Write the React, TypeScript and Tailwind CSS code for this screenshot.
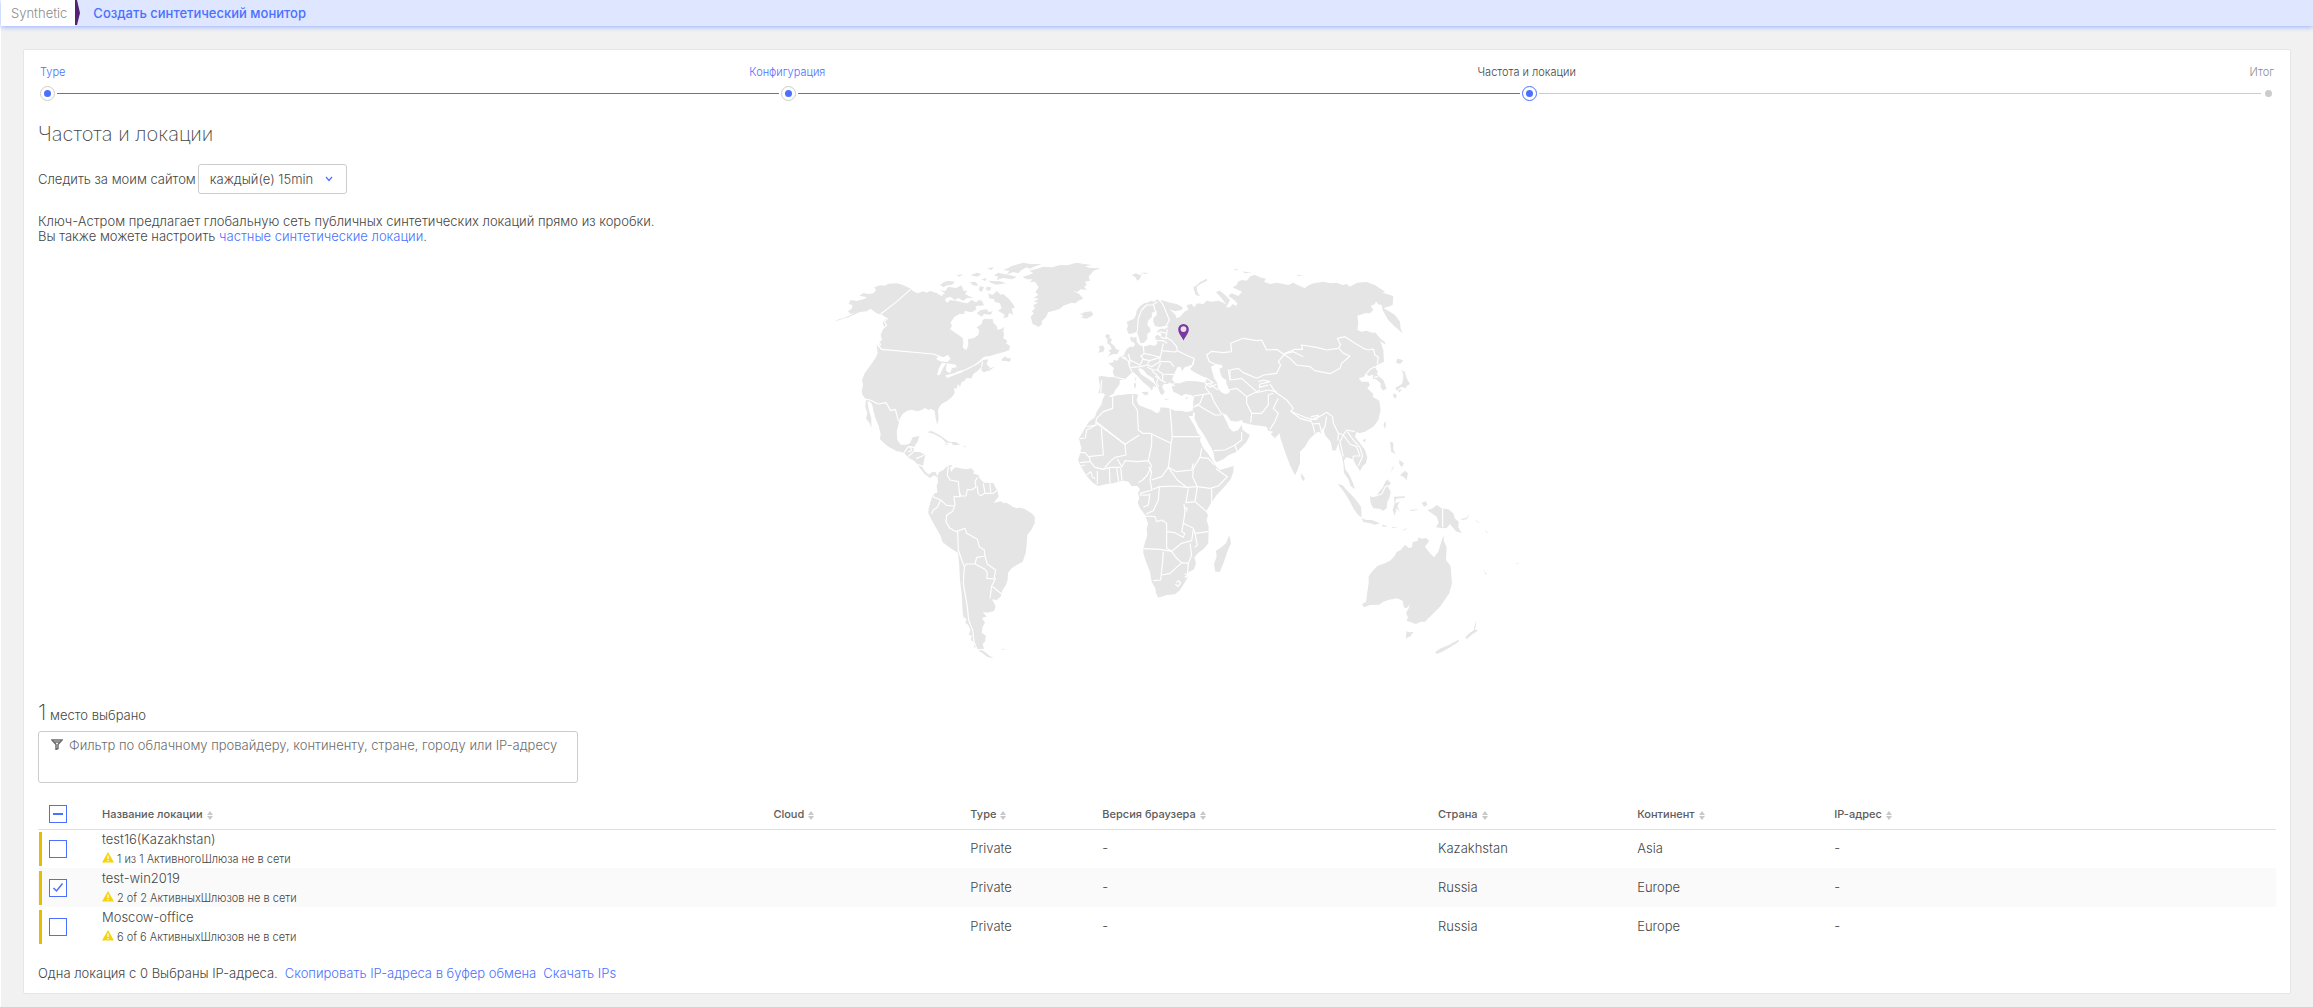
import React, { useState } from 'react';

const LAND = '#e5e5e5';

const americaLand = [
  // mainland
  '10,215 28,207 40,205 60,196 75,188 62,192 54,184 65,176 68,166 56,162 62,150 80,153 100,148 112,142 88,137 100,129 115,132 130,130 138,120 133,112 150,106 165,107 175,101 200,100 212,103 220,106 240,115 248,122 262,130 280,124 290,128 300,123 322,130 330,136 350,142 345,150 352,158 360,150 378,152 395,157 412,160 425,150 440,158 448,165 436,170 440,178 425,187 405,183 402,192 388,192 372,202 362,218 366,228 360,237 372,246 385,254 398,264 400,280 398,290 402,297 410,299 415,285 414,268 432,264 445,255 448,240 440,232 455,222 458,210 465,206 478,208 488,206 490,218 500,228 503,240 515,236 522,230 520,245 522,252 520,265 532,272 528,280 540,288 538,300 525,305 500,312 480,318 462,320 445,335 430,350 445,338 458,330 475,328 470,342 480,352 462,368 454,360 455,350 442,364 430,372 425,385 408,385 404,393 395,396 390,410 384,402 380,416 372,414 374,430 365,442 352,452 335,462 328,470 324,482 326,505 322,524 317,505 314,482 302,476 295,480 285,474 275,480 262,484 245,479 232,482 218,492 210,505 205,525 200,545 202,570 212,584 228,584 240,580 248,562 268,558 264,572 258,582 252,592 250,606 270,606 286,616 282,632 278,654 284,662 295,674 308,666 318,667 322,682 312,676 300,684 284,672 270,655 262,642 252,632 234,622 222,608 212,605 200,604 190,598 178,592 165,582 150,568 152,552 146,528 135,500 130,480 126,462 118,454 112,456 116,478 124,505 124,534 118,518 108,506 112,490 106,470 108,448 98,436 95,425 99,405 96,390 104,370 122,345 138,322 143,308 140,282 154,300 146,280 156,270 152,255 162,232 158,215 168,205 158,195 140,190 122,176 110,184 90,186 55,202',
  // arctic islands
  '475,130 488,135 500,123 512,134 520,132 540,150 555,172 545,176 550,195 538,188 533,202 520,204 524,194 504,182 515,175 510,160 495,156 492,148 478,145',
  '330,120 345,124 355,110 378,114 395,106 400,122 412,122 405,132 430,145 412,144 400,152 385,144 375,150 360,140 350,144 335,135 345,130',
  '330,105 342,96 355,92 375,95 366,104 352,106 340,112',
  '545,48 580,38 600,42 635,42 612,50 600,56 590,52 575,60 565,70 550,66 530,74 538,62 520,60 535,54',
  '505,68 540,76 560,80 548,88 520,84 500,90 505,80 492,76',
  '475,92 510,94 528,100 500,104 485,100',
  '422,76 440,68 455,72 442,80', '380,76 400,72 388,80', '455,88 470,84 466,94', '472,55 492,52 484,60', '420,96 438,96 445,108 428,106',
  '450,108 462,112 455,126 446,120', '470,110 484,112 480,122 468,120',
  '440,190 452,180 470,178 476,186 488,184 482,194 462,192 456,200',
  '436,160 446,150 456,152 462,166 448,168',
  '515,327 527,318 530,324 543,325 540,335 525,332 516,334', '458,366 475,356 494,350 478,362',
  '290,546 305,543 330,556 352,572 366,578 348,578 335,565 312,552', '362,576 378,576 390,584 370,586', '345,580 356,583 348,585', '398,588 410,589 404,591',
  // greenland
  '578,80 595,76 610,68 598,62 622,56 640,50 668,52 690,45 712,46 740,38 762,42 785,45 765,49 780,54 812,55 790,62 785,70 776,80 780,92 765,95 770,105 763,110 770,120 752,118 742,126 728,122 748,132 760,146 745,152 736,160 725,158 700,167 690,176 672,182 655,186 648,202 636,212 635,224 626,230 608,222 602,200 612,190 605,184 615,176 610,165 625,158 612,155 626,146 612,143 625,134 616,126 626,112 615,95 600,96 608,88 590,88',
  '750,192 758,190 765,186 785,184 790,195 770,206 754,203 760,197',
];

const southAmericaLand = [
  '262,78 268,66 280,60 290,50 300,46 308,44 300,55 304,66 310,56 318,52 330,55 350,58 364,55 374,66 368,70 385,75 388,84 402,98 430,99 436,112 442,120 446,140 435,152 432,160 450,152 462,160 470,158 488,170 500,175 512,173 525,178 545,190 554,200 554,220 545,238 532,255 530,285 527,310 518,335 500,345 485,355 474,368 473,390 468,405 458,420 452,440 440,450 425,448 432,458 437,470 432,483 412,488 398,486 410,500 396,504 405,518 398,530 395,548 408,558 405,575 398,582 402,596 385,598 372,590 374,578 362,570 366,556 356,556 362,540 354,524 346,518 350,508 340,500 338,485 337,470 335,430 330,390 328,350 324,308 305,297 278,277 272,258 262,240 245,210 235,190 236,175 246,142 254,130 262,128 260,108 264,95',
  '385,602 396,600 410,610 416,616 432,625 412,621 398,610',
  '454,598 468,596 458,600',
];

const eurasiaLand = [
  '115,380 125,378 145,381 165,382 158,365 162,354 145,340 160,337 160,330 172,332 178,322 190,318 200,298 210,290 222,290 225,282 216,272 222,262 230,262 230,275 238,285 250,290 270,284 282,288 292,282 290,270 284,262 292,254 300,258 306,262 302,248 290,245 300,236 318,236 326,228 312,228 300,231 285,228 280,215 280,205 290,195 290,182 284,186 275,188 276,200 264,212 262,225 270,234 272,244 262,252 262,266 252,278 242,280 236,262 230,244 222,250 206,252 200,238 204,228 200,215 222,206 228,195 230,182 240,168 252,160 262,158 272,152 282,155 292,148 300,155 305,150 330,158 350,162 368,172 366,180 345,184 328,178 345,192 350,205 360,200 375,184 385,180 380,165 395,162 402,172 412,160 430,162 440,152 455,155 475,152 490,158 500,164 482,142 468,126 480,122 492,132 510,150 505,160 498,172 510,172 518,162 528,168 532,160 520,148 505,138 515,130 535,138 546,125 530,118 518,112 530,105 535,94 548,90 560,92 572,78 585,75 600,82 618,86 612,95 630,102 650,98 685,105 700,98 720,108 735,115 742,108 760,100 790,95 812,100 830,98 848,105 860,102 870,110 880,104 892,98 920,96 945,105 975,125 968,128 1000,138 998,165 985,170 970,174 985,182 1005,195 1020,215 1022,236 1028,250 1005,230 985,210 976,195 968,180 965,165 955,163 948,154 945,162 932,168 940,180 930,190 915,190 892,197 895,218 892,240 905,245 920,242 940,250 950,260 962,275 970,300 972,335 958,342 950,345 945,352 954,365 950,372 960,382 970,390 980,415 970,422 962,412 962,400 948,388 938,386 940,374 925,378 918,368 912,380 896,385 905,395 925,395 930,404 922,415 940,432 938,440 958,452 962,480 955,510 940,530 915,545 898,550 890,545 885,560 900,580 915,600 922,622 918,640 908,648 900,664 895,654 888,645 880,630 870,625 858,622 852,632 856,658 864,668 870,678 880,702 885,718 872,708 866,690 852,668 850,640 846,620 838,596 835,580 828,600 818,603 812,575 795,555 790,530 785,550 775,545 765,552 748,568 735,590 720,605 720,640 712,662 705,675 692,650 675,605 663,570 658,550 645,565 632,552 640,545 625,542 620,530 605,528 580,525 550,518 545,510 530,515 512,512 500,495 486,488 492,500 500,515 508,535 520,545 535,540 545,524 548,540 570,555 560,575 545,590 530,605 505,616 490,628 470,637 464,630 460,605 446,580 428,548 415,530 403,505 405,490 398,485 400,455 402,440 392,435 375,432 365,438 350,430 340,425 335,410 345,400 325,402 312,402 306,410 314,425 308,436 300,430 294,412 286,400 280,385 262,374 250,360 240,354 235,358 242,372 262,385 282,400 290,412 280,408 276,422 268,412 248,395 230,375 218,365 205,378 195,388 180,390 178,404 166,420 160,432 142,440 130,430 115,430 120,410 118,395',
  '135,258 142,252 150,256 148,264 156,268 152,278 165,290 168,298 178,300 172,312 158,313 143,320 152,308 145,302 155,296 150,286 142,280 142,268',
  '115,290 128,286 134,296 130,305 114,308 120,298',
  '405,130 400,112 412,104 420,96 440,86 442,92 425,100 410,110 412,125 420,138 408,136',
  '215,75 228,70 240,76 246,70 240,86 232,92 226,82', '242,68 268,68 255,72', '520,58 535,58 530,62', '545,64 575,68 556,70', '708,74 732,75 716,78',
  '225,382 229,385 227,396', '222,400 228,400 227,414 222,412', '245,426 265,425 262,436 252,434', '312,446 328,447 318,450', '375,445 386,440 380,448',
  '210,262 218,260 220,272 214,276',
  '940,245 948,250 962,266 975,276 976,284 960,272 950,262 942,254',
  '1012,326 1022,328 1030,332 1020,342 1008,338', '1025,360 1035,366 1040,385 1050,402 1040,408 1038,415 1024,410 1010,422 1006,414 1026,402 1030,385 1030,372',
  '1000,430 1010,434 1008,446 1000,440', '1014,420 1026,418 1018,428', '975,514 978,522 975,537 971,526', '908,570 918,566 914,578',
  '990,575 1000,578 1000,600 1008,612 994,606', '1020,676 1035,662 1044,670 1040,690 1030,680', '1002,645 1000,655 990,668', '1018,630 1032,640 1026,652 1018,642',
  '722,668 735,685 730,694 724,684',
  '966,718 978,692 992,700 984,712',
];

const africaLand = [
  '135,45 155,52 170,46 185,45 205,42 225,42 235,44 230,60 236,75 260,85 275,90 290,100 298,96 302,82 325,84 345,92 365,92 380,96 400,92 398,108 386,108 395,124 405,140 412,158 422,170 420,182 430,205 445,222 455,238 465,255 470,262 480,270 500,264 521,258 520,275 512,298 498,315 470,345 450,375 438,395 444,405 440,420 446,440 445,490 430,508 415,518 403,532 408,550 402,568 385,577 382,595 360,630 345,643 320,645 295,653 288,640 286,625 275,605 270,575 258,545 250,520 250,505 262,465 260,450 264,430 255,405 240,385 233,368 238,355 234,340 240,328 232,318 215,318 205,305 190,302 172,306 160,310 140,312 115,318 98,308 82,290 72,275 62,258 54,240 60,222 64,205 57,175 75,145 88,124 105,112 110,95 125,72 128,58',
  '508,466 513,490 503,512 492,545 480,575 466,575 462,552 470,530 468,512 482,503 498,490',
];

const oceaniaLand = [
  '216,492 228,486 230,470 236,430 236,410 242,400 262,378 285,370 300,362 314,348 320,336 332,330 345,314 356,324 366,322 368,306 384,302 385,292 395,296 408,294 418,302 405,320 420,340 432,352 445,335 452,312 460,286 462,304 470,322 468,360 482,378 486,430 478,460 450,500 425,525 405,545 392,545 378,552 350,542 354,530 348,520 356,505 360,492 338,520 350,505 342,502 338,482 320,475 295,480 278,486 268,494 240,495 222,502',
  '350,574 360,577 371,575 362,588 347,596', '436,636 450,626 475,616 508,598 505,606 480,622 455,636 440,642',
  '556,542 558,558 554,568 564,572 548,582 530,598 526,592 540,578 552,570',
  '143,132 158,136 175,156 185,165 200,182 213,200 215,232 205,226 190,205 180,185 165,160 156,148',
  '215,234 228,240 245,240 270,250 255,254 240,250 220,246', '275,254 295,258 280,261', '302,260 325,262 310,264', '335,272 355,262 345,270',
  '240,168 250,172 262,165 268,154 282,140 285,128 292,118 303,130 294,140 302,155 298,175 292,185 290,205 280,212 268,206 250,205 242,190',
  '312,170 345,169 345,173 318,176 316,190 330,185 322,198 330,216 320,205 314,228 308,210 314,190',
  '395,188 408,184 412,195 402,200', '356,210 390,208 368,213', '412,210 426,206 440,195 455,205 475,208 490,220 495,236 506,245 505,262 515,280 498,274 480,252 470,265 455,264 438,262 446,248 440,230 420,216',
  '512,236 528,234 540,222 530,238 516,240', '580,388 592,406 586,402', '678,370 686,368 682,373', '554,238 572,252 560,245', '585,268 596,282 588,276',
];

const waters = [
  '345,400 336,388 344,368 352,352 362,350 366,364 374,352 386,348 395,345 405,325 400,345 390,358 402,366 425,378 440,388 436,398 410,394 380,393 360,400',
  '453,350 468,342 486,345 488,352 478,356 482,372 486,382 498,390 500,402 510,425 500,433 486,428 474,415 472,398 462,385 458,368',
];

const lakes = [
  '318,326 330,318 340,322 354,314 362,326 352,336 330,334',
  '336,338 348,340 338,356 330,374 321,376 326,356',
  '350,340 378,344 380,352 366,354 360,370 348,362', '346,376 364,372 378,368 400,360 398,366 372,376 352,384',
];

const americaBorders = [
  '242,118 200,155 152,192', '138,278 155,298 310,312 330,320', '378,368 405,360 425,350 440,342 458,330', '458,335 455,350',
  '108,448 120,450 145,462 168,458 182,482 196,478 205,512 212,515', '222,608 235,590 252,592', '234,606 244,602 242,588', '234,620 250,606', '258,626 282,616', '264,644 280,650',
  '160,200 172,206 162,215 170,225 160,235', '140,278 152,282 146,292', '470,345 480,340 490,350',
];
const southAmericaBorders = [
  '295,50 292,75 300,90 325,95 328,125 330,140 312,140 315,165 308,184 290,196 288,215 300,235 318,245 345,235 350,250 382,268 388,290 403,300 405,318 380,322 375,342 350,342 343,350',
  '328,125 332,138 348,138 352,118 365,120 378,110 375,95 382,82', '382,110 384,130 392,137 405,130 400,100', '405,130 430,130 442,120', '420,100 422,128',
  '248,140 272,150 262,172 250,180 245,192', '272,150 290,166 312,168', '323,245 325,300 335,330 343,350 340,400 345,430 352,470 356,510 368,540 372,575 382,600',
  '375,342 405,358 412,368 410,385 432,387 437,360 412,342 405,318', '437,385 425,408 455,432', '425,408 420,445', '438,155 462,150',
];
const eurasiaBorders = [
  '300,150 312,170 328,210 316,232', '292,155 278,165 260,165 245,180 235,205 232,245', '280,162 287,188', '322,238 318,262 335,272 350,290 352,302 385,318 402,325 398,345',
  '298,245 320,250', '302,262 320,266', '288,272 310,272 322,280', '310,280 305,302 345,306 352,302', '250,288 252,310 275,315 300,322 306,302', '300,322 300,335 330,335 342,350', '205,312 210,330 208,348', '210,330 240,345 250,325 242,318 252,312',
  '250,328 270,332 300,322', '185,322 205,332 208,348 216,366', '212,352 240,350 262,345 268,332', '262,345 275,350 300,335', '262,352 280,360 292,360 302,340', '275,362 290,375 302,390 318,398', '292,360 308,372 345,374', '308,372 308,392',
  '285,380 296,382 290,398 296,410', '190,320 200,325', '165,381 195,388', '125,390 122,430',
  '470,345 448,335 440,315 455,304 490,308 515,305 512,280 550,265 590,272 605,270 620,300 650,298 670,312 705,298 728,298 724,285 770,292 800,300 835,295 842,285 832,265 855,260 885,280 910,295 925,300 940,297 945,315 955,322 952,342',
  '670,312 690,325 710,345 750,350 765,362 810,371 840,355 845,340 870,318 850,310 838,296', '672,312 700,305 730,320',
  '510,360 535,355 550,368 590,385 612,375 650,370 662,345 655,335 672,315', '505,358 510,390 545,385 590,425', '510,390 510,360', '505,420 530,415 560,440 590,425 600,420', '595,395 610,390 630,395 600,402 598,412 625,405', '560,440 560,460 575,490 572,518',
  '575,490 605,490 625,465 625,435 640,430', '590,428 625,420 650,425', '630,402 645,425 680,450 700,475 692,484 735,502 758,508 778,500 800,487 818,500 820,520 835,550 850,555 860,540 885,545', '655,445 640,475 655,490 645,515 630,538', '695,486 720,505 755,515',
  '752,508 760,530 765,550', '758,522 778,520 785,548', '800,500 795,530 786,545', '835,550 834,572', '850,555 840,575 850,620', '850,555 870,582 890,590 900,618 880,618 878,640', '862,545 880,570 900,592 908,618 895,648', '752,500 775,496 770,508 755,508',
  '400,472 415,465 430,475 465,495 485,495', '400,438 450,430 436,412 440,400', '430,435 420,460 402,470', '452,430 462,455 478,480 485,492', '415,378 440,385 460,398 440,402', '445,400 475,420', '435,398 450,412 470,402', '462,602 495,600 525,585 545,570 545,545', '525,585 532,606', '945,350 930,358 920,370', '942,382 955,380', '325,398 345,408',
];
const africaBorders = [
  '158,52 158,85 130,95 110,115 108,125 195,193 238,165', '60,176 76,174 80,150 108,135 108,125', '80,140 110,135', '124,145 130,225 85,230', '218,45 218,70 232,90 235,150 248,160 270,160 333,190', '330,84 337,170 420,170', '337,170 333,190 330,225 325,262',
  '275,160 275,195 265,242', '108,128 195,193 198,225 165,232 150,245 130,268', '185,262 195,242 230,245 265,242 275,258 262,285 248,300 235,308', '60,218 75,218 90,235 90,245 60,248', '62,258 75,255', '88,242 105,262 130,268 150,262 180,262', '80,285 92,275 98,292 106,296', '112,272 112,312', '148,264 150,310', '170,265 176,305', '182,262 186,302', '172,236 186,262',
  '266,260 275,275 270,300 276,330 240,340', '275,300 305,290 325,262 350,275 395,270 400,250', '325,262 352,300 380,322 410,320', '278,328 300,320 350,318 378,322', '420,232 400,265 398,290 412,320 450,325 475,318 502,290 468,266', '462,255 445,235 420,232 425,205',
  '412,320 405,365 378,368 385,325', '405,365 440,395', '455,325 455,370', '298,322 295,360 280,392 258,402', '270,340 265,375 250,382', '255,408 285,410 290,425 305,420 320,430 320,455 345,458 370,472 374,460 365,455 370,430 375,395 372,372', '370,430 400,445 405,460 445,455', '320,455 320,505 335,514', '250,506 300,508 335,514 365,490 395,482 400,448', '405,460 412,495 405,502',
  '310,515 308,545 302,600 280,602', '305,585 330,580 365,548 385,550 395,525 390,490', '335,514 350,535 365,548', '385,550 382,590', '348,608 356,602 362,608 354,620 346,612', '374,583 382,582 380,592 374,590', '238,345 268,345', '372,382 382,385 378,395',
];
const oceaniaBorders = ['458,205 458,262', '244,168 258,168 275,162 286,140 298,136'];

type Region = { x: number; y: number; land: string[]; borders: string[]; water: string[] };

const regions: Region[] = [
  { x: 830, y: 250, land: americaLand, borders: americaBorders, water: lakes },
  { x: 850, y: 450, land: southAmericaLand, borders: southAmericaBorders, water: [] },
  { x: 1060, y: 250, land: eurasiaLand, borders: eurasiaBorders, water: waters },
  { x: 1060, y: 380, land: africaLand, borders: africaBorders, water: [] },
  { x: 1290, y: 440, land: oceaniaLand, borders: oceaniaBorders, water: [] },
];

function WorldMap() {
  return (
    <svg viewBox="757 250 800 420" className="mx-auto block h-[420px] w-[800px] max-w-full" role="img" aria-label="Карта локаций">
      {regions.map((r) => (
        <g key={`${r.x}-${r.y}`} transform={`translate(${r.x} ${r.y}) scale(0.3333)`} strokeLinejoin="round">
          {r.land.map((p) => (
            <polygon key={p} points={p} fill={LAND} />
          ))}
          {r.water.map((p) => (
            <polygon key={p} points={p} fill="#fff" />
          ))}
          {r.borders.map((p) => (
            <polyline key={p} points={p} fill="none" stroke="#fff" strokeWidth="3.5" />
          ))}
        </g>
      ))}
      <path
        fillRule="evenodd"
        fill="#7c38a1"
        d="M1183.5 340.500c-1.600-3.600-5.300-7.200-5.300-11.300a5.300 5.300 0 0 1 10.600 0c0 4.100-3.700 7.700-5.300 11.300zm0-14.300a2.900 2.900 0 1 0 0 5.800 2.900 2.900 0 0 0 0-5.800z"
      />
    </svg>
  );
}

type StepState = 'done' | 'current' | 'todo';

function Dot({ state }: { state: StepState }) {
  if (state === 'todo') return <span className="size-[7px] shrink-0 rounded-full bg-[#cccccc]" />;
  return (
    <span
      className={
        state === 'current'
          ? 'flex size-[15px] shrink-0 items-center justify-center rounded-full border border-[#4b70ff]'
          : 'flex size-[15px] shrink-0 items-center justify-center rounded-full border border-[#cccccc]'
      }
    >
      <span className="size-[7px] rounded-full bg-[#4b70ff]" />
    </span>
  );
}

function Stepper() {
  return (
    <nav aria-label="Шаги" className="text-[11px] leading-4">
      <div className="relative flex justify-between">
        <a href="#type" className="text-[#4b70ff]">Type</a>
        <div className="absolute inset-x-2">
          <a href="#config" className="absolute left-1/3 -translate-x-1/2 text-[#4b70ff]">Конфигурация</a>
          <span className="absolute left-2/3 -translate-x-1/2 whitespace-nowrap text-[#454646]">Частота и локации</span>
        </div>
        <span className="text-[#8c8c8c]">Итог</span>
      </div>
      <div className="mt-1.5 mr-0.5 flex items-center">
        <Dot state="done" />
        <span className="mx-0.5 h-px flex-1 bg-[#4b70ff]" />
        <Dot state="done" />
        <span className="mx-0.5 h-px flex-1 bg-[#4b70ff]" />
        <Dot state="current" />
        <span className="mx-0.5 h-px flex-1 bg-[#cccccc]" />
        <span className="flex w-[9px] justify-end"><Dot state="todo" /></span>
      </div>
    </nav>
  );
}

function Check({ label, checked, mixed, onChange }: { label: string; checked: boolean; mixed?: boolean; onChange: () => void }) {
  return (
    <label className="relative block size-[18px]">
      <input
        type="checkbox"
        aria-label={label}
        checked={checked}
        onChange={onChange}
        className="block size-[18px] appearance-none border border-[#4b70ff] bg-white"
      />
      <svg viewBox="0 0 18 18" className="pointer-events-none absolute inset-0 size-[18px]" fill="none" stroke="#4b70ff">
        {mixed ? <path d="M4 9h10" strokeWidth="2" /> : checked ? <path d="M4.500 9l3 3 6-7.500" strokeWidth="1.500" /> : null}
      </svg>
    </label>
  );
}

function SortIcon() {
  return (
    <svg viewBox="0 0 6 9" className="mt-0.5 h-[9px] w-[6px]" fill="#c8c8c8">
      <path d="M3 0l3 4H0zM3 9L0 5h6z" />
    </svg>
  );
}

function Warning() {
  return (
    <svg viewBox="0 0 12 11" className="mb-0.5 h-[11px] w-3 shrink-0">
      <path d="M6 0l6 10.500H0z" fill="#f5d30f" />
      <path d="M6 3.500v3.500M6 8v1.200" stroke="#fff" strokeWidth="1.200" />
    </svg>
  );
}

const columns = ['Название локации', 'Cloud', 'Type', 'Версия браузера', 'Страна', 'Континент', 'IP-адрес'];

const rows = [
  { name: 'test16(Kazakhstan)', note: '1 из 1 АктивногоШлюза не в сети', country: 'Kazakhstan', continent: 'Asia' },
  { name: 'test-win2019', note: '2 of 2 АктивныхШлюзов не в сети', country: 'Russia', continent: 'Europe' },
  { name: 'Moscow-office', note: '6 of 6 АктивныхШлюзов не в сети', country: 'Russia', continent: 'Europe' },
];

function LocationsTable() {
  const [selected, setSelected] = useState([false, true, false]);
  const all = selected.every(Boolean);
  return (
    <table className="mt-[17px] w-full table-fixed border-collapse text-left">
      <colgroup>
        <col className="w-16" />
        <col className="w-[30%]" />
        <col className="w-[8.8%]" />
        <col className="w-[5.9%]" />
        <col className="w-[15%]" />
        <col className="w-[8.9%]" />
        <col className="w-[8.8%]" />
        <col />
      </colgroup>
      <thead>
        <tr className="h-[29px] border-b border-[#e0e0e0] text-[11px] text-[#5c5c5c]">
          <th className="p-0 pl-[11px]">
            <Check label="Выбрать все" checked={all} mixed={!all && selected.some(Boolean)} onChange={() => setSelected(selected.map(() => !all))} />
          </th>
          {columns.map((c) => (
            <th key={c} scope="col" className="p-0">
              <button type="button" className="flex items-center gap-1 font-medium">
                {c}
                <SortIcon />
              </button>
            </th>
          ))}
        </tr>
      </thead>
      <tbody>
        {rows.map((r, i) => (
          <tr key={r.name} className="h-[39px] even:bg-[#fafafa]">
            <td className="p-0">
              <div className="flex items-center gap-[7px] pl-px">
                <span className="h-[34px] w-[3px] bg-[#e6be00]" />
                <Check label={r.name} checked={selected[i]} onChange={() => setSelected(selected.map((s, j) => (j === i ? !s : s)))} />
              </div>
            </td>
            <td className="p-0">
              <div className="leading-4">{r.name}</div>
              <div className="mt-1 flex items-center gap-[3px] text-[11px] leading-4">
                <Warning />
                {r.note}
              </div>
            </td>
            <td className="p-0" />
            <td className="p-0">Private</td>
            <td className="p-0">-</td>
            <td className="p-0">{r.country}</td>
            <td className="p-0">{r.continent}</td>
            <td className="p-0">-</td>
          </tr>
        ))}
      </tbody>
    </table>
  );
}

export default function App() {
  return (
    <div className="min-h-screen border-l border-white bg-[#f1f1f1] pb-3 font-[Inter,sans-serif] text-[13px] leading-[15px] font-light text-[#454646]">
      <header className="flex h-[26px] items-center bg-[#dfe6ff] shadow-[0_1px_5px_#94adff]">
        <a href="#synthetic" className="flex h-full items-center bg-white pr-2 pl-2.5 text-[#8c8c8c]">Synthetic</a>
        <svg viewBox="0 0 5 26" className="h-[26px] w-[5px]" fill="#522273">
          <path d="M0 0h2l3 13-3 12H0z" />
        </svg>
        <a href="#create" className="ml-[13px] font-medium text-[#4b70ff]">Создать синтетический монитор</a>
      </header>

      <main className="mx-[22px] mt-[23px] rounded-[2px] border border-[#e6e6e6] bg-white px-3.5 pt-3.5 pb-3">
        <div className="px-0.5">
          <Stepper />
        </div>

        <h1 className="mt-[19px] text-[20px] leading-7 font-extralight">Частота и локации</h1>

        <div className="mt-4 flex items-center gap-0.5">
          <label htmlFor="freq">Следить за моим сайтом</label>
          <span className="relative">
            <select
              id="freq"
              defaultValue="15"
              className="h-[30px] w-[149px] appearance-none rounded-[3px] border border-[#cccccc] bg-white px-[11px] font-light"
            >
              <option value="15">каждый(е) 15min</option>
            </select>
            <svg viewBox="0 0 8 6" className="pointer-events-none absolute top-3 right-3.5 h-[6px] w-2" fill="none" stroke="#4b70ff" strokeWidth="1.200">
              <path d="M1 1l3 3.500 3-3.500" />
            </svg>
          </span>
        </div>

        <p className="mt-5">
          Ключ-Астром предлагает глобальную сеть публичных синтетических локаций прямо из коробки.
          <br />
          Вы также можете настроить <a href="#private" className="text-[#4b70ff]">частные синтетические локации</a>.
        </p>

        <div className="mt-1.5">
          <WorldMap />
        </div>

        <p className="mt-7 leading-7">
          <span className="text-[22px] font-extralight">1</span> место выбрано
        </p>

        <label className="mt-0.5 flex h-[52px] w-[540px] items-start gap-[6px] rounded-[3px] border border-[#cccccc] px-3 pt-[5px]">
          <svg viewBox="0 0 12 11" className="mt-0.5 h-[11px] w-3 shrink-0" fill="none" stroke="#6d6d6d" strokeWidth="1.500">
            <path d="M1 1h10L7 5.500V9.500L5 10.500V5.500zM2.500 3h7" />
          </svg>
          <input
            aria-label="Фильтр"
            placeholder="Фильтр по облачному провайдеру, континенту, стране, городу или IP-адресу"
            className="h-4 flex-1 bg-transparent outline-none placeholder:text-[#6d6d6d]"
          />
        </label>

        <LocationsTable />

        <p className="mt-5 flex gap-[7px]">
          <span>Одна локация с 0 Выбраны IP-адреса.</span>
          <a href="#copy" className="text-[#4b70ff]">Скопировать IP-адреса в буфер обмена</a>
          <a href="#download" className="text-[#4b70ff]">Скачать IPs</a>
        </p>
      </main>
    </div>
  );
}
